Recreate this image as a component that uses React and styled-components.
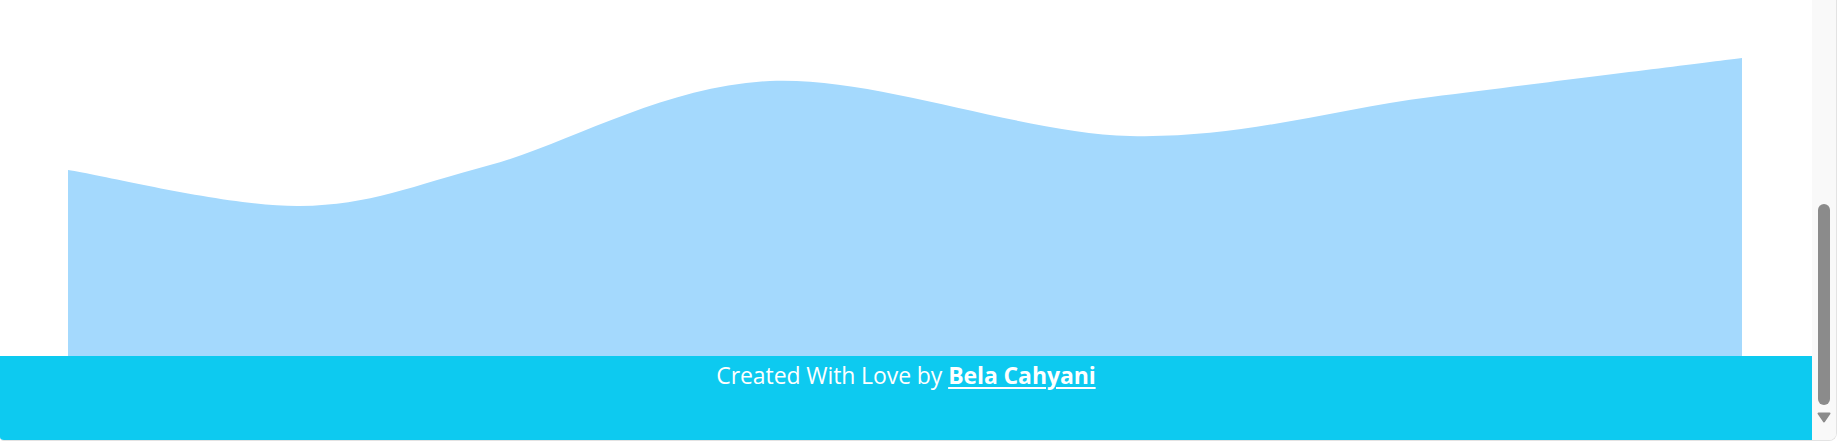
import React from "react";
import styled, { createGlobalStyle } from "styled-components";

const GlobalStyle = createGlobalStyle`
  html, body { margin: 0; padding: 0; background: #ffffff; }
  body { font-family: "Open Sans", "Noto Sans", Arial, sans-serif; overflow: hidden; }
  #root { width: 1839px; height: 445px; }
`;

const Page = styled.div`
  width: 1839px;
  height: 445px;
  background: #ffffff;
  box-sizing: border-box;
`;

const Window = styled.div`
  display: flex;
  width: 1837px;
  height: 441px;
  box-sizing: border-box;
  border-right: 1px solid #e3e3e3;
  border-bottom: 1px solid #e3e3e3;
  border-bottom-right-radius: 8px;
  border-bottom-left-radius: 4px;
  overflow: hidden;
  background: #ffffff;
`;

const Viewport = styled.div`
  width: 1812px;
  flex: none;
  display: flex;
  flex-direction: column;
`;

const ChartArea = styled.div`
  height: 356px;
  flex: none;
  background: #ffffff;
`;

const WaveSvg = styled.svg`
  display: block;
  width: 1812px;
  height: 356px;
`;

const Footer = styled.footer`
  flex: 1;
  background: #0dcaf0;
  color: #ffffff;
  text-align: center;
  font-size: 23px;
  line-height: 1.5;
  padding-top: 2px;
  letter-spacing: -0.1px;
`;

const AuthorLink = styled.a`
  color: #ffffff;
  font-weight: 700;
  text-decoration: underline;
  text-underline-offset: 3px;
  text-decoration-thickness: 2px;
`;

const ScrollTrack = styled.div`
  flex: 1;
  background: #f9f9f9;
  display: flex;
  flex-direction: column;
  align-items: center;
  padding-top: 204px;
  box-sizing: border-box;
`;

const ScrollThumb = styled.div`
  width: 12px;
  height: 201px;
  border-radius: 6px;
  background: #8b8b8b;
`;

const ArrowSvg = styled.svg`
  display: block;
  margin-top: 7px;
`;

const points = [
  [68, 170],
  [300, 206],
  [490, 165],
  [770, 81],
  [1130, 136],
  [1431, 97],
  [1742, 58],
];

function buildPath(pts, baseY) {
  let d = `M${pts[0][0]},${baseY} L${pts[0][0]},${pts[0][1]}`;
  for (let i = 0; i < pts.length - 1; i++) {
    const p0 = pts[i - 1] || pts[i];
    const p1 = pts[i];
    const p2 = pts[i + 1];
    const p3 = pts[i + 2] || p2;
    const t = 6;
    const c1x = p1[0] + (p2[0] - p0[0]) / t;
    const c1y = p1[1] + (p2[1] - p0[1]) / t;
    const c2x = p2[0] - (p3[0] - p1[0]) / t;
    const c2y = p2[1] - (p3[1] - p1[1]) / t;
    d += ` C${c1x.toFixed(1)},${c1y.toFixed(1)} ${c2x.toFixed(1)},${c2y.toFixed(1)} ${p2[0]},${p2[1]}`;
  }
  d += ` L${pts[pts.length - 1][0]},${baseY} Z`;
  return d;
}

export default function App() {
  const d = buildPath(points, 356);
  return (
    <Page>
      <GlobalStyle />
      <Window>
        <Viewport>
          <ChartArea>
            <WaveSvg viewBox="0 0 1812 356">
              <path d={d} fill="#a4d9fd" />
            </WaveSvg>
          </ChartArea>
          <Footer>
            Created With Love by <AuthorLink href="#">Bela Cahyani</AuthorLink>
          </Footer>
        </Viewport>
        <ScrollTrack>
          <ScrollThumb />
          <ArrowSvg width="14" height="11" viewBox="0 0 14 11">
            <path d="M1.5,1.5 L12.5,1.5 L7,9.5 Z" fill="#8b8b8b" stroke="#8b8b8b" strokeWidth="2" strokeLinejoin="round" />
          </ArrowSvg>
        </ScrollTrack>
      </Window>
    </Page>
  );
}
